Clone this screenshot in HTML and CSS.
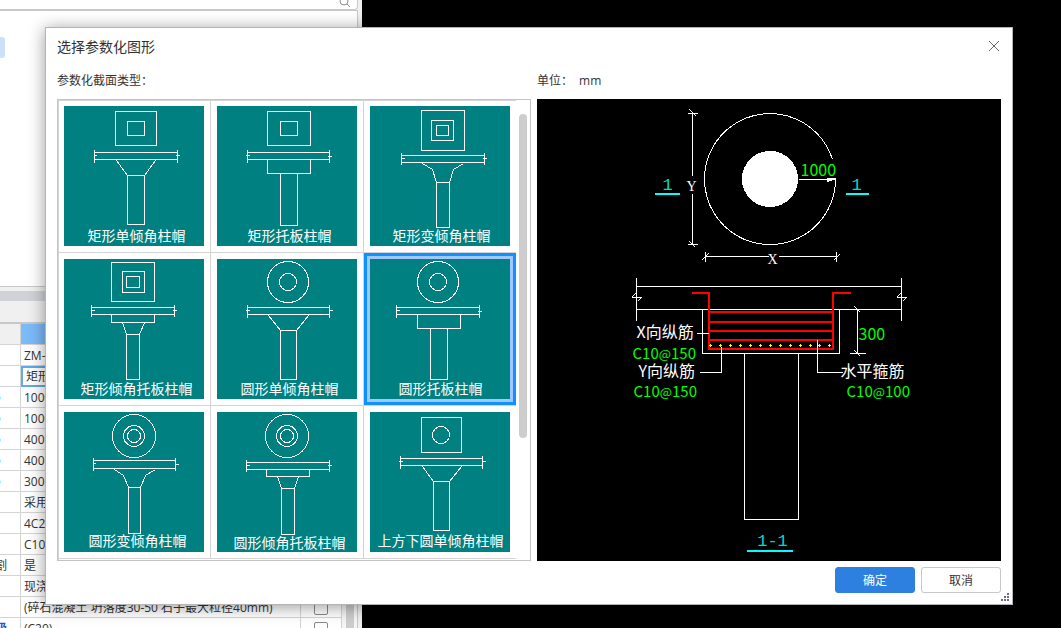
FILE: index.html
```
<!DOCTYPE html>
<html lang="zh-CN">
<head>
  <meta charset="UTF-8">
  <title>选择参数化图形</title>
  <link rel="stylesheet" href="styles.css">
</head>
<body>
  <!-- Main window behind the dialog -->
  <div class="workspace">
    <div class="side-panel">
      <div class="search-box">
        <svg width="12" height="12" viewBox="0 0 12 12" fill="none" stroke="#8c8c8c"><circle cx="6" cy="4" r="4"/><path d="M9 7l3 3"/></svg>
      </div>
      <div class="component-list"><div class="list-item"></div></div>
      <div class="splitter"></div>
      <div class="property-panel">
        <table class="properties">
          <tr class="head"><th></th><th class="value-head"></th><th></th></tr>
          <tr><td></td><td>ZM-1</td><td></td></tr>
          <tr><td></td><td class="editing">矩形托板</td><td></td></tr>
          <tr><td class="dot"></td><td>1000</td><td></td></tr>
          <tr><td class="dot"></td><td>1000</td><td></td></tr>
          <tr><td class="dot"></td><td>400</td><td></td></tr>
          <tr><td class="dot"></td><td>400</td><td></td></tr>
          <tr><td class="dot"></td><td>300</td><td></td></tr>
          <tr><td></td><td>采用</td><td></td></tr>
          <tr><td></td><td>4C20</td><td></td></tr>
          <tr><td></td><td>C10</td><td></td></tr>
          <tr><td class="name"><span>割</span></td><td>是</td><td></td></tr>
          <tr><td></td><td>现浇</td><td></td></tr>
          <tr><td></td><td>(碎石混凝土 坍落度30-50 石子最大粒径40mm)</td><td class="check"><input type="checkbox" aria-label="附加"></td></tr>
          <tr><td class="name blue"><span>级</span></td><td>(C20)</td><td class="check"><input type="checkbox" aria-label="附加"></td></tr>
        </table>
        <div class="panel-scroll"></div>
      </div>
    </div>
    <div class="canvas"></div>
  </div>

  <!-- Dialog -->
  <div class="overlay">
    <div class="dialog" role="dialog" aria-labelledby="dialogTitle">
      <div class="dialog-header">
        <span id="dialogTitle">选择参数化图形</span>
        <button class="close" aria-label="关闭"><svg width="12" height="12" viewBox="0 0 12 12" stroke="#666" fill="none"><path d="M1 1l10 10M11 1L1 11"/></svg></button>
      </div>
      <div class="labels">
        <span class="type-label">参数化截面类型：</span>
        <span>单位：</span>
        <span class="unit">mm</span>
      </div>

      <div class="dialog-body">
        <div class="shape-list">
          <div class="shape-grid">
            <button class="shape">
              <svg viewBox="-.5 -.5 140 140">
                <path d="M51 5H92V39H51zM63 15H80V29H63z"/>
                <path d="M30 46H113M30 53H113M30 43V56M113 43V56M29 49h3M111 49h4"/>
                <path d="M52 54L63 69M91 54L80 69M63 69H80V118H63z"/>
                <text x="72" y="134">矩形单倾角柱帽</text>
              </svg>
            </button>
            <button class="shape">
              <svg viewBox="-.5 -.5 140 140">
                <path d="M50 5H93V39H50zM63 15H80V29H63z"/>
                <path d="M30 46H112M30 53H112M30 43V56M112 43V56M28 49h4M110 50h4"/>
                <path d="M50 53V67H93V53M63 67V119H80V67"/>
                <text x="72" y="134">矩形托板柱帽</text>
              </svg>
            </button>
            <button class="shape">
              <svg viewBox="-.5 -.5 140 140">
                <path d="M51 4H94V44H51zM61 14H83V34H61zM66 19H78V29H66z"/>
                <path d="M31 49H114M31 56H114M31 46V58M114 46V58M30 52h4M112 52h4"/>
                <path d="M52 57L62 63L66 76M93 57L83 63L79 76M66 76H79V121H66z"/>
                <text x="71" y="134">矩形变倾角柱帽</text>
              </svg>
            </button>
            <button class="shape">
              <svg viewBox="-.5 -.5 140 140">
                <path d="M47 3H90V42H47zM58 12H80V33H58zM62 17H75V28H62z"/>
                <path d="M27 48H110M27 55H110M27 45V57M110 45V57M26 51h4M108 51h4"/>
                <path d="M47 55V63H90V55M58 63L62 75M80 63L75 75M62 75H75V120H62z"/>
                <text x="72" y="134">矩形倾角托板柱帽</text>
              </svg>
            </button>
            <button class="shape">
              <svg viewBox="-.5 -.5 140 140">
                <circle cx="70.5" cy="22.5" r="20.5"/><circle cx="70.5" cy="22.5" r="8.5"/>
                <path d="M30 48H112M30 55H112M30 45V58M112 45V58M28 51h4M111 51h4"/>
                <path d="M51 56L63 71M91 56L79 71M63 71H79V120H63z"/>
                <text x="72" y="134">圆形单倾角柱帽</text>
              </svg>
            </button>
            <button class="shape selected" aria-pressed="true">
              <svg viewBox="-.5 -.5 140 140">
                <circle cx="67.5" cy="22.5" r="20.5"/><circle cx="67.5" cy="22.5" r="8.5"/>
                <path d="M26 48H109M26 55H109M26 45V58M109 45V58M25 51h4M107 52h4"/>
                <path d="M47 55V69H90V55M60 69V120H77V69"/>
                <text x="70" y="134">圆形托板柱帽</text>
              </svg>
            </button>
            <button class="shape">
              <svg viewBox="-.5 -.5 140 140">
                <circle cx="69.5" cy="23.5" r="21.5"/><circle cx="69.5" cy="23.5" r="10.5"/><circle cx="69.5" cy="23.5" r="6.5"/>
                <path d="M29 48H111M29 56H111M29 45V58M111 45V58M28 51h3M110 52h4"/>
                <path d="M50 57L59 63L64 75M91 57L81 63L76 75M64 75H76V121H64z"/>
                <text x="73" y="133">圆形变倾角柱帽</text>
              </svg>
            </button>
            <button class="shape">
              <svg viewBox="-.5 -.5 140 140">
                <circle cx="69.5" cy="23.5" r="21.5"/><circle cx="69.5" cy="23.5" r="10.5"/><circle cx="69.5" cy="23.5" r="6.5"/>
                <path d="M29 50H112M29 57H112M29 47V59M112 47V59M28 53h4M110 53h4"/>
                <path d="M49 57V64H92V57M60 64L64 76M81 64L77 76M64 76H77V122H64z"/>
                <text x="72" y="135">圆形倾角托板柱帽</text>
              </svg>
            </button>
            <button class="shape">
              <svg viewBox="-.5 -.5 140 140">
                <path d="M51 5H91V40H51z"/><circle cx="70.5" cy="22.5" r="8.5"/>
                <path d="M30 46H112M30 53H112M30 43V56M112 43V56M28 49h4M111 49h4"/>
                <path d="M52 54L63 69M91 54L79 69M63 69H79V118H63z"/>
                <text x="70" y="133">上方下圆单倾角柱帽</text>
              </svg>
            </button>
          </div>
          <div class="list-scroll"><div class="thumb"></div></div>
        </div>

        <div class="preview">
          <svg width="464" height="462" viewBox="-.5 -.5 464 462">
            <!-- plan view -->
            <g class="line">
              <path d="M295 60A65.5 65.5 0 1 0 298 80"/>
              <circle class="solid" cx="232.5" cy="79.5" r="27.5"/>
              <path d="M261 80H298M298 79v4"/>
              <path class="solid" d="M290 79l8 0l-8 3z"/>
              <path d="M155 14V76M155 94V145M150 14H160M150 145H160M152 10l7 7M152 142l6 6"/>
              <path d="M168 157H231M241 157H299M168 152V162M299 152V162M164 161l7-7M296 161l6-6"/>
            </g>
            <path class="cyan" d="M117 94.5H142M308 94.5H331M209 451.5H255"/>
            <text class="mark" x="130" y="90">1</text>
            <text class="mark" x="319" y="90">1</text>
            <text class="axis" x="154" y="91">Y</text>
            <text class="axis" x="235" y="164">X</text>
            <text class="dim" x="263" y="76">1000</text>

            <!-- section 1-1 -->
            <g class="line">
              <path d="M99 187H364M99 210H364M99 178V221M364 178V221"/>
              <path d="M94 198h10M94 198l4-4M104 198l-4 4M359 198h10M359 198l4-4M369 198l-4 4"/>
              <path d="M165 210V254H302V210M207 254V420H261V254"/>
              <path d="M320 210V254M312 254H328M317 207l6 6M317 251l6 6"/>
            </g>
            <g class="rebar">
              <path d="M154 193.5H171.5V249.5H295.5V193.5H313"/>
              <path d="M172 212.5H296M172 222.5H296M172 231.5H296M172 240.5H296"/>
            </g>
            <path class="dots" d="M171.5 246h3M181.5 246h3M191.5 246h3M201.5 246h3M211.5 246h3M221.5 246h3M231.5 246h3M241.5 246h3M251.5 246h3M261.5 246h3M271.5 246h3M280.5 246h3M290.5 246h3M173 244.5v3M183 244.5v3M193 244.5v3M203 244.5v3M213 244.5v3M223 244.5v3M233 244.5v3M243 244.5v3M253 244.5v3M263 244.5v3M273 244.5v3M282 244.5v3M292 244.5v3"/>
            <g class="line"><path d="M159 234H171M162 273H184V247M280 240V273H305"/></g>
            <text class="note" x="99" y="238">X向纵筋</text>
            <text class="note" x="101" y="277">Y向纵筋</text>
            <text class="note" x="303" y="277">水平箍筋</text>
            <text class="steel" x="95" y="259">C10<tspan class="at">@</tspan>150</text>
            <text class="steel" x="96" y="297">C10<tspan class="at">@</tspan>150</text>
            <text class="steel" x="309" y="297">C10<tspan class="at">@</tspan>100</text>
            <text class="dim" x="321" y="240">300</text>
            <text class="mark" x="235" y="446">1-1</text>
          </svg>
        </div>
      </div>

      <div class="dialog-footer">
        <button class="btn primary">确定</button>
        <button class="btn">取消</button>
      </div>
      <svg class="grip" width="8" height="8" viewBox="0 0 8 8" fill="#6b6b7b"><path d="M6 0h2v2H6zM3 3h2v2H3zM6 3h2v2H6zM0 6h2v2H0zM3 6h2v2H3zM6 6h2v2H6z"/></svg>
    </div>
  </div>
</body>
</html>
```
FILE: styles.css
```
* {
  box-sizing: border-box;
}

body {
  margin: 0;
  height: 100vh;
  overflow: hidden;
  font-family: "Open Sans", "Noto Sans CJK SC", sans-serif;
  font-size: 12px;
  color: #333;
  background-color: #000;
}

button {
  font: inherit;
  cursor: pointer;
}

/* main window */
.workspace {
  display: flex;
  height: 100vh;
}

.side-panel {
  display: flex;
  flex-direction: column;
  width: 362px;
  height: 100%;
  padding-right: 4px;
  background-color: #f0f0f0;
  overflow: hidden;
}

.canvas {
  flex: 1;
  background-color: #000;
}

.search-box {
  display: flex;
  flex: none;
  justify-content: flex-end;
  align-items: flex-end;
  height: 10px;
  padding-right: 7px;
  background-color: #fff;
  border: 1px solid #c8c8c8;
  border-width: 0 1px 1px 0;
  border-radius: 0 0 4px 0;
}

.component-list {
  flex: none;
  height: 277px;
  padding-top: 26px;
  background-color: #fff;
  border: 1px solid #c8c8c8;
  border-left: none;
}

.list-item {
  width: 5px;
  height: 21px;
  background-color: #cce0fa;
  border-radius: 0 3px 3px 0;
}

.splitter {
  flex: none;
  height: 10px;
  margin: 4px 0 21px;
  background-color: #d0d2d8;
}

.property-panel {
  display: flex;
  flex: none;
  background-color: #f5f5f5;
  border: 1px solid #c8c8c8;
  border-width: 2px 1px 0 0;
}

.properties {
  table-layout: fixed;
  width: 342px;
  border-collapse: separate;
  border-spacing: 0;
  background-color: #fff;
}

.properties th,
.properties td {
  height: 21px;
  padding: 2px 0 0 3px;
  line-height: 18px;
  white-space: nowrap;
  overflow: hidden;
  border: 1px solid #d4d4d4;
  border-width: 0 1px 1px 0;
}

.properties th {
  width: 280px;
  background-color: #f0f0f0;
}

.properties th:first-child {
  width: 21px;
}

.properties th:last-child {
  width: 41px;
}

.properties th.value-head {
  background-color: #7cbaf8;
}

.properties td.editing {
  padding-top: 0;
  border: 2px solid #66a6ea;
  line-height: 17px;
}

.properties td:first-child {
  padding-left: 0;
}

.dot::before {
  content: "";
  display: block;
  width: 4px;
  height: 4px;
  margin-left: -3px;
  border-radius: 2px;
  background-color: #8ef0ff;
}

.name span {
  margin-left: -5px;
}

.blue {
  color: #1a50f0;
  font-weight: bold;
}

.properties td.check {
  padding: 0;
  text-align: center;
}

.check input {
  appearance: none;
  width: 14px;
  height: 14px;
  margin: 0;
  vertical-align: middle;
  background-color: #fff;
  border: 1px solid #888;
  border-radius: 2px;
}

.panel-scroll {
  width: 8px;
  margin-left: 4px;
  background-color: #cdcdcd;
}

/* dialog */
.overlay {
  position: absolute;
  inset: 0;
  padding: 27px 48px 23px 45px;
}

.dialog {
  position: relative;
  display: flex;
  flex-direction: column;
  height: 100%;
  padding: 0 11px;
  background-color: #fff;
  border: 1px solid #b4b4b4;
  box-shadow: 0 2px 16px rgba(0, 0, 0, 0.4);
}

.dialog-header {
  display: flex;
  justify-content: space-between;
  align-items: center;
  height: 36px;
  font-size: 14px;
}

.close {
  display: flex;
  padding: 1px;
  background: none;
  border: none;
}

.labels {
  display: flex;
  height: 35px;
  line-height: 34px;
}

.type-label {
  width: 480px;
}

.unit {
  margin-left: 6px;
}

.dialog-body {
  display: flex;
  flex: 1;
  gap: 6px;
  min-height: 0;
}

.shape-list {
  display: flex;
  width: 474px;
  border: 1px solid #c4c4c4;
  overflow: hidden;
}

.shape-grid {
  display: grid;
  grid-template-columns: 153px 153px 152px;
  grid-auto-rows: 153px;
  align-content: start;
  box-shadow: inset 1px 1px 0 #d4d4d4;
}

.shape {
  padding: 6px;
  background: none;
  border: solid #d4d4d4;
  border-width: 0 1px 1px 0;
}

.shape:nth-child(3n) {
  border-right: none;
}

.shape.selected {
  background-color: #a0c8ff;
  box-shadow: inset 0 0 0 3px #0f92ff;
}

.shape svg {
  display: block;
  width: 140px;
  height: 140px;
  background-color: #008080;
  fill: none;
  stroke: #fff;
  shape-rendering: crispEdges;
}

.shape text {
  fill: #fff;
  stroke: none;
  font-family: "Noto Sans CJK SC", sans-serif;
  font-size: 14px;
  text-anchor: middle;
}

.list-scroll {
  flex: 1;
  padding: 14px 3px 0;
}

.thumb {
  width: 8px;
  height: 324px;
  border-radius: 4px;
  background-color: #cdcdcd;
}

.preview {
  display: flex;
  flex: 1;
  justify-content: center;
  align-items: center;
  overflow: hidden;
  background-color: #000;
}

.preview svg {
  flex: none;
  font-family: "Noto Sans CJK SC", sans-serif;
  fill: none;
  shape-rendering: crispEdges;
}

.line {
  stroke: #fff;
}

.solid {
  fill: #fff;
}

.cyan {
  stroke: #00ffff;
  stroke-width: 2;
}

.rebar {
  stroke: #ff0000;
  stroke-width: 2;
}

.dots {
  stroke: #ffff00;
}

.mark {
  font-family: "Liberation Mono", monospace;
  font-size: 17px;
  text-anchor: middle;
  fill: #00dcc8;
}

.axis {
  font-family: "Liberation Serif", serif;
  font-size: 14px;
  text-anchor: middle;
  fill: #fff;
}

.note {
  font-size: 16px;
  fill: #fff;
}

.dim {
  font-size: 16px;
  fill: #00ff00;
}

.steel {
  font-size: 15px;
  fill: #00ff00;
}

.at {
  font-size: 13px;
}

.dialog-footer {
  display: flex;
  justify-content: flex-end;
  gap: 6px;
  padding: 6px 0 11px;
}

.btn {
  width: 80px;
  height: 26px;
  padding: 0;
  color: #333;
  background-color: #fff;
  border: 1px solid #c8c8c8;
  border-radius: 3px;
}

.btn.primary {
  color: #fff;
  background-color: #2d7fe0;
  border-color: #2d7fe0;
}

.grip {
  position: absolute;
  right: 3px;
  bottom: 3px;
}
```
